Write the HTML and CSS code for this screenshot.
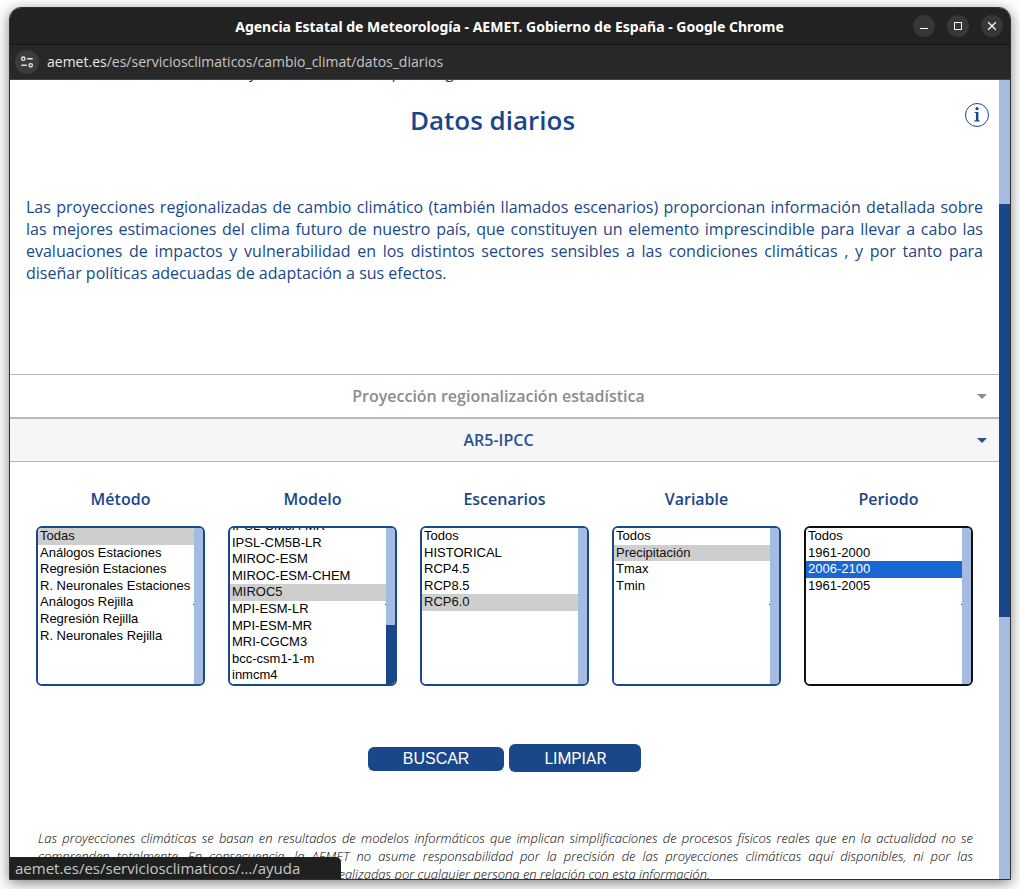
FILE: index.html
```html
<!DOCTYPE html>
<html lang="es">
<head>
<meta charset="utf-8">
<title>Agencia Estatal de Meteorología - AEMET. Gobierno de España</title>
<link rel="stylesheet" href="styles.css">
</head>
<body>
<div class="window">
  <header class="titlebar">
    <div class="titlebar-title">Agencia Estatal de Meteorología - AEMET. Gobierno de España - Google Chrome</div>
    <div class="window-controls">
      <button class="window-button" type="button" aria-label="Minimizar"><svg width="22" height="22" viewBox="0 0 22 22"><path d="M7 13.5h8" stroke="#fff" fill="none"/></svg></button>
      <button class="window-button" type="button" aria-label="Maximizar"><svg width="22" height="22" viewBox="0 0 22 22"><path d="M7.500 7.500h7v7h-7z" stroke="#fff" fill="none"/></svg></button>
      <button class="window-button" type="button" aria-label="Cerrar"><svg width="22" height="22" viewBox="0 0 22 22"><path d="M7.200 7.200l7.600 7.600M14.800 7.200l-7.600 7.600" stroke="#fff" stroke-width="1.300" fill="none"/></svg></button>
    </div>
  </header>
  <div class="urlbar">
    <button class="site-button" type="button" aria-label="Información del sitio"><svg width="24" height="24" viewBox="0 0 24 24" fill="none" stroke="#e3e3e3" stroke-width="1.400"><circle cx="8.300" cy="8.700" r="1.700"/><path d="M12.200 8.700h5.600M6.200 15.300h5.600"/><circle cx="15.700" cy="15.300" r="1.700"/></svg></button>
    <div class="url"><span class="url-host">aemet.es</span>/es/serviciosclimaticos/cambio_climat/datos_diarios</div>
  </div>
  <div class="viewport">
    <main class="page">
      <p class="lead">Mejores de climáticas para región</p>
      <div class="heading">
        <h1 class="title">Datos diarios</h1>
        <a class="info" href="#ayuda" aria-label="Ayuda"><svg width="24" height="24" viewBox="0 0 24 24"><circle cx="12" cy="12" r="11.500" fill="none" stroke="#1a4789"/><circle cx="12" cy="5.700" r="1.600" fill="#1a4789"/><path d="M9.500 9h3.900v8.300l1.400.3v.8H9.300v-.8l1.600-.3V10l-1.400-.3z" fill="#1a4789"/></svg></a>
      </div>
      <p class="intro">Las proyecciones regionalizadas de cambio climático (también llamados escenarios) proporcionan información detallada sobre las mejores estimaciones del clima futuro de nuestro país, que constituyen un elemento imprescindible para llevar a cabo las evaluaciones de impactos y vulnerabilidad en los distintos sectores sensibles a las condiciones climáticas , y por tanto para diseñar políticas adecuadas de adaptación a sus efectos.</p>
      <button class="accordion" type="button"><span class="accordion-label">Proyección regionalización estadística</span><span class="caret"></span></button>
      <button class="accordion accordion-open" type="button"><span class="accordion-label">AR5-IPCC</span><span class="caret"></span></button>
      <form class="filters">
        <div class="columns">
          <div class="column">
            <label class="column-label" for="metodo">Método</label>
            <div class="listbox marked">
              <select class="list" id="metodo" size="9">
                <option selected>Todas</option>
                <option>Análogos Estaciones</option>
                <option>Regresión Estaciones</option>
                <option>R. Neuronales Estaciones</option>
                <option>Análogos Rejilla</option>
                <option>Regresión Rejilla</option>
                <option>R. Neuronales Rejilla</option>
              </select>
              <div class="track"></div>
            </div>
          </div>
          <div class="column">
            <label class="column-label" for="modelo">Modelo</label>
            <div class="listbox marked">
              <select class="list" id="modelo" size="9">
                <option>IPSL-CM5A-MR</option>
                <option>IPSL-CM5B-LR</option>
                <option>MIROC-ESM</option>
                <option>MIROC-ESM-CHEM</option>
                <option selected>MIROC5</option>
                <option>MPI-ESM-LR</option>
                <option>MPI-ESM-MR</option>
                <option>MRI-CGCM3</option>
                <option>bcc-csm1-1-m</option>
                <option>inmcm4</option>
              </select>
              <div class="track track-end"><div class="list-thumb"></div></div>
            </div>
          </div>
          <div class="column">
            <label class="column-label" for="escenarios">Escenarios</label>
            <div class="listbox">
              <select class="list" id="escenarios" size="9">
                <option>Todos</option>
                <option>HISTORICAL</option>
                <option>RCP4.5</option>
                <option>RCP8.5</option>
                <option selected>RCP6.0</option>
              </select>
              <div class="track"></div>
            </div>
          </div>
          <div class="column">
            <label class="column-label" for="variable">Variable</label>
            <div class="listbox marked">
              <select class="list" id="variable" size="9">
                <option>Todos</option>
                <option selected>Precipitación</option>
                <option>Tmax</option>
                <option>Tmin</option>
              </select>
              <div class="track"></div>
            </div>
          </div>
          <div class="column">
            <label class="column-label" for="periodo">Periodo</label>
            <div class="listbox marked listbox-active">
              <select class="list" id="periodo" size="9">
                <option>Todos</option>
                <option>1961-2000</option>
                <option selected>2006-2100</option>
                <option>1961-2005</option>
              </select>
              <div class="track"></div>
            </div>
          </div>
        </div>
        <div class="actions">
          <button class="action" type="submit">BUSCAR</button>
          <button class="action action-reset" type="reset">LIMPIAR</button>
        </div>
      </form>
      <p class="notice">Las proyecciones climáticas se basan en resultados de modelos informáticos que implican simplificaciones de procesos físicos reales que en la actualidad no se comprenden totalmente. En consecuencia, la AEMET no asume responsabilidad por la precisión de las proyecciones climáticas aquí disponibles, ni por las conclusiones, las valoraciones o las interpretaciones realizadas por cualquier persona en relación con esta información.</p>
    </main>
    <div class="scrollbar"><div class="scrollbar-thumb"></div></div>
    <div class="status">aemet.es/es/serviciosclimaticos/…/ayuda</div>
  </div>
</div>
<script src="script.js"></script>
</body>
</html>
```
FILE: styles.css
```css
:root {
  --blue: #1a4789;
  --pale: #a5bbe1;
}

* {
  box-sizing: border-box;
}

body {
  margin: 0;
  height: 100vh;
  padding: 7px 9px 9px;
  background: #fff;
  color: var(--blue);
  font-family: "Open Sans", "Noto Sans", sans-serif;
  font-size: 16px;
  line-height: 22px;
  overflow: hidden;
}

.window {
  display: flex;
  flex-direction: column;
  height: 100%;
  border: 1px solid #2f2f2f;
  border-radius: 12px 12px 0 0;
  overflow: hidden;
  background: #fff;
  box-shadow: 0 3px 14px rgba(0, 0, 0, 0.5);
}

.titlebar {
  display: grid;
  grid-template-columns: 1fr auto 1fr;
  align-items: center;
  height: 37px;
  padding-right: 7px;
  flex: none;
  background: #222;
  border-bottom: 1px solid #151515;
}

.titlebar-title {
  grid-column: 2;
  padding: 1px 0 0 6px;
  color: #fff;
  font-family: "Noto Sans", sans-serif;
  font-size: 14px;
  font-weight: 700;
  white-space: nowrap;
}

.window-controls {
  display: flex;
  justify-content: flex-end;
  gap: 12px;
}

.window-button,
.site-button {
  display: block;
  padding: 0;
  border: 0;
  border-radius: 50%;
  background: #373737;
}

.window-button {
  width: 22px;
  height: 22px;
}

.window-button svg,
.site-button svg,
.info svg {
  display: block;
}

.urlbar {
  display: flex;
  align-items: center;
  gap: 8px;
  flex: none;
  height: 35px;
  padding-left: 5px;
  background: #282828;
  border-bottom: 1px solid #444;
}

.site-button {
  background: #3c3c3c;
}

.url {
  color: #c7c7c7;
  font-family: "Open Sans", sans-serif;
  font-size: 14px;
}

.url-host {
  color: #e8e8e8;
}

.viewport {
  position: relative;
  display: flex;
  flex: 1;
  min-height: 0;
}

.page {
  flex: 1;
  min-width: 0;
  overflow: hidden;
}

.lead {
  margin: -19px 0 0;
  padding-right: 305px;
  text-align: center;
}

.heading {
  display: grid;
  grid-template-columns: 1fr 24px;
  padding: 19px 10px 0;
}

.title {
  margin: 0;
  font-size: 26px;
  line-height: 36px;
  font-weight: 600;
  text-align: center;
}

.info {
  padding-top: 1px;
}

.intro {
  margin: 58px 16px 90px;
  text-align: justify;
}

.accordion {
  display: flex;
  align-items: center;
  width: 100%;
  height: 44px;
  padding: 0 12px 0 10px;
  border: 0;
  border-top: 1px solid #b9b9b9;
  border-bottom: 1px solid #b9b9b9;
  background: #fff;
  color: #8c8c8c;
  font: 600 16px/22px "Open Sans", sans-serif;
}

.accordion-open {
  background: #f6f6f6;
  color: #2a5292;
}

.accordion-label {
  flex: 1;
}

.caret {
  border: 5px solid transparent;
  border-top-color: currentColor;
  border-bottom: 0;
}

.columns {
  display: grid;
  grid-template-columns: repeat(5, 1fr);
  gap: 23px;
  padding: 26px 26px 0;
}

.column-label {
  display: block;
  margin-bottom: 16px;
  text-align: center;
  font-weight: 600;
}

.listbox {
  position: relative;
  display: flex;
  height: 160px;
  border: 2px solid var(--blue);
  border-radius: 6px;
  overflow: hidden;
}

.marked::after {
  content: "";
  position: absolute;
  right: 9px;
  top: 76px;
  width: 1px;
  height: 1px;
  background: var(--blue);
}

.listbox-active {
  border-color: #101010;
}

.list {
  flex: 1;
  min-width: 0;
  height: 100%;
  padding: 0;
  border: 0;
  outline: 0;
  background: #fff;
  color: #000;
  font: 13px "Liberation Sans", Arial, sans-serif;
  scrollbar-width: none;
}

.list option {
  box-sizing: content-box;
}

.listbox-active option:checked {
  background-image: linear-gradient(#1967d2, #1967d2);
  -webkit-text-fill-color: #fff;
}

.track {
  display: flex;
  flex-direction: column;
  width: 9px;
  background: var(--pale);
}

.track-end {
  justify-content: flex-end;
}

.list-thumb {
  height: 38%;
  background: var(--blue);
}

.actions {
  display: flex;
  justify-content: center;
  align-items: baseline;
  gap: 5px;
  margin-top: 58px;
}

.action {
  height: 24px;
  padding: 0 35px;
  border: 0;
  border-radius: 6px;
  background: var(--blue);
  color: #fff;
  font: 16px "Liberation Sans", Arial, sans-serif;
}

.action-reset {
  height: 28px;
  font-family: Roboto, sans-serif;
}

.notice {
  margin: 57px 26px 0 28px;
  color: #000;
  font-size: 13px;
  font-weight: 300;
  line-height: 18px;
  font-style: italic;
  text-align: justify;
}

.scrollbar {
  width: 11px;
  height: 100%;
  padding-top: 124px;
  background: var(--pale);
}

.scrollbar-thumb {
  height: 413px;
  background: var(--blue);
}

.status {
  position: absolute;
  left: 0;
  bottom: 0;
  width: 331px;
  padding: 0 5px;
  border-radius: 0 5px 0 0;
  background: #1f2120;
  color: #c7c7c7;
  font-family: "Open Sans", sans-serif;
  font-size: 15px;
}
```
FILE: script.js
```js
const models = document.getElementById("modelo");
models.scrollTop = models.scrollHeight;
```
